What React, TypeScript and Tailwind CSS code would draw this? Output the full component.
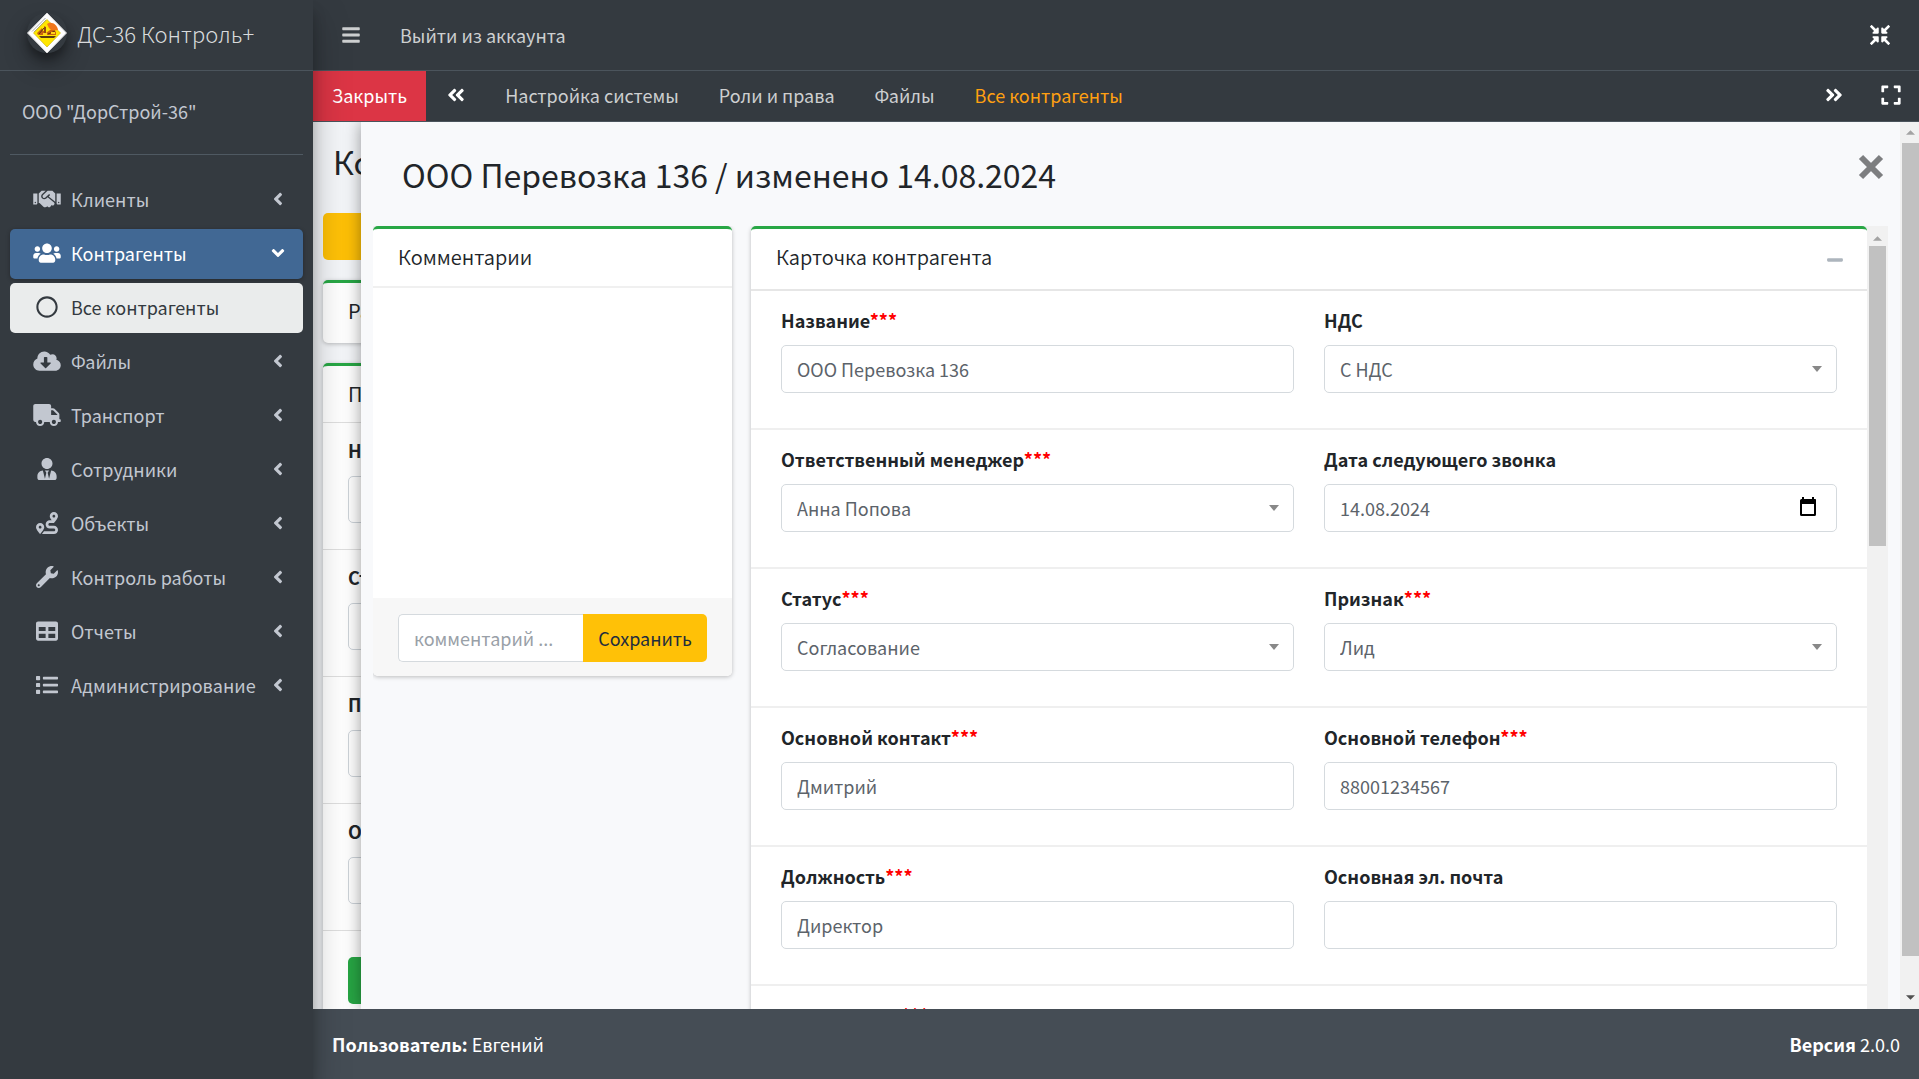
import type { ReactNode } from "react";
import {
  FaAngleDoubleLeft,
  FaAngleDoubleRight,
  FaAngleDown,
  FaAngleLeft,
  FaBars,
  FaCloudDownloadAlt,
  FaCompressArrowsAlt,
  FaExpand,
  FaHandshake,
  FaList,
  FaMinus,
  FaRegCircle,
  FaRoute,
  FaTable,
  FaTruck,
  FaUserTie,
  FaUsers,
  FaWrench,
} from "react-icons/fa";

const WIDE_ICON = "h-[22px] w-7";
const ICON = "size-[22px]";

function Logo() {
  return (
    <span className="flex size-10 items-center justify-center rounded-full shadow-[0_12px_24px_rgba(0,0,0,0.3),0_6px_8px_rgba(0,0,0,0.3)]">
      <svg viewBox="0 0 40 40" className="size-10" aria-hidden="true">
        <path d="M20 0 39.500 20 20 40 .5 20Z" fill="#fff" stroke="#d5d5d5" strokeWidth="1" />
        <path d="M5 18.500 18.500 5M7 19 19 7" stroke="#a8a8a8" strokeWidth="1" fill="none" />
        <path d="M20 6.500 33.500 20 20 34 6.500 20Z" fill="#ffe600" stroke="#c4ad00" strokeWidth=".6" />
        <path d="M20 11c4-3 10 0 11 6l-6 1-3-3Z" fill="#f0761a" />
        <path d="M10 20l5-5 1 3h1v-5l2 1v6l4-3h4l2 2v3H11Z" fill="#c9640f" />
        <path d="M12 21l5-6M18 14v8M21 21l7-3" stroke="#5a3410" strokeWidth="1" fill="none" />
        <path d="M12 23h17l-2 2H14Z" fill="#5a3c10" />
        <path d="M16 20h4v2h-4ZM24 19h4v2h-4Z" fill="#ffd21a" />
      </svg>
    </span>
  );
}

type Item = { label: string; icon: ReactNode; active?: boolean; child?: boolean };

const MENU: Item[] = [
  { label: "Клиенты", icon: <FaHandshake className={WIDE_ICON} /> },
  { label: "Контрагенты", icon: <FaUsers className={WIDE_ICON} />, active: true },
  { label: "Все контрагенты", icon: <FaRegCircle className={ICON} />, child: true },
  { label: "Файлы", icon: <FaCloudDownloadAlt className={WIDE_ICON} /> },
  { label: "Транспорт", icon: <FaTruck className={WIDE_ICON} /> },
  { label: "Сотрудники", icon: <FaUserTie className={ICON} /> },
  { label: "Объекты", icon: <FaRoute className={ICON} /> },
  { label: "Контроль работы", icon: <FaWrench className={ICON} /> },
  { label: "Отчеты", icon: <FaTable className={ICON} /> },
  { label: "Администрирование", icon: <FaList className={ICON} /> },
];

function menuTone(item: Item) {
  if (item.active) return "bg-[#416894] text-white shadow-[0_1px_4px_rgba(0,0,0,0.3)]";
  if (item.child) return "bg-[#eaecec] text-[#343a40]";
  return "text-[#c2c7d0]";
}

function Sidebar() {
  return (
    <aside className="relative z-20 flex w-[313px] shrink-0 flex-col bg-[#343a40] shadow-[0_18px_35px_rgba(0,0,0,0.25),0_12px_12px_rgba(0,0,0,0.22)]">
      <a href="#" className="flex h-[71px] items-center gap-[10px] border-b border-[#4b545c] pb-1 pl-[27px] text-[#d8dadc]">
        <Logo />
        <span className="text-[22px] leading-8 font-light">ДС-36 Контроль+</span>
      </a>
      <div className="mx-[10px] flex h-[84px] items-center border-b border-[#4f5962] pb-1 pl-3 text-[#c2c7d0]">
        ООО "ДорСтрой-36"
      </div>
      <nav className="mx-[10px] mt-5 flex flex-col gap-1">
        {MENU.map((item) => (
          <a
            key={item.label}
            href="#"
            className={`flex h-[50px] items-center rounded-[5px] pr-[15px] pb-0.5 pl-5 ${menuTone(item)}`}
          >
            <span className="mr-[7px] flex w-[34px] justify-center">{item.icon}</span>
            <span className="grow">{item.label}</span>
            {item.child ? null : item.active ? (
              <FaAngleDown className="size-5" />
            ) : (
              <FaAngleLeft className="size-5" />
            )}
          </a>
        ))}
      </nav>
    </aside>
  );
}

const TABS = ["Настройка системы", "Роли и права", "Файлы", "Все контрагенты"];

function TopBars() {
  return (
    <header className="shrink-0 bg-[#343a40] text-[#cdcfd0]">
      <div className="flex h-[71px] items-center border-b border-[#4b545c] pr-[29px] pb-px pl-7">
        <button type="button" aria-label="Меню">
          <FaBars className="size-5" />
        </button>
        <a href="#" className="ml-[39px]">
          Выйти из аккаунта
        </a>
        <button type="button" aria-label="Свернуть" className="ml-auto text-white">
          <FaCompressArrowsAlt className="size-5" />
        </button>
      </div>
      <div className="flex h-[51px] items-center border-b border-[#4b545c]">
        <button type="button" className="h-[50px] bg-[#dc3545] px-[19px] pb-0.5 text-white">
          Закрыть
        </button>
        <div className="flex grow items-center pb-0.5">
          <button type="button" aria-label="Назад" className="mr-[19px] ml-5 text-white">
            <FaAngleDoubleLeft className="size-5" />
          </button>
          {TABS.map((tab) => (
            <a
              key={tab}
              href="#"
              className={tab === "Все контрагенты" ? "px-5 text-[#ffa011]" : "px-5"}
            >
              {tab}
            </a>
          ))}
          <button type="button" aria-label="Вперед" className="ml-auto text-white">
            <FaAngleDoubleRight className="size-5" />
          </button>
          <button type="button" aria-label="На весь экран" className="mr-[17px] ml-9 text-white">
            <FaExpand className="size-[22px]" />
          </button>
        </div>
      </div>
    </header>
  );
}

const FILTERS = ["Название", "Статус", "Признак", "Ответственный"];

function ListPage() {
  return (
    <div className="h-full overflow-hidden bg-[#f4f6f9] px-[10px] text-[#212529]">
      <h1 className="flex h-[91px] items-start pt-4 pl-[10px] text-[32px] leading-[46px]">Контрагенты</h1>
      <button type="button" aria-label="Добавить" className="block h-[47px] w-full rounded-[5px] bg-[#ffc107]" />
      <section className="mt-5 rounded-[5px] border-t-[3px] border-[#28a745] bg-white shadow-[0_1px_4px_rgba(0,0,0,0.25)]">
        <h2 className="pb-1 pl-[25px] text-xl leading-[56px]">Разделы</h2>
      </section>
      <section className="mt-5 rounded-[5px] border-t-[3px] border-[#28a745] bg-white shadow-[0_1px_4px_rgba(0,0,0,0.25)]">
        <h2 className="border-b border-[#dfdfdf] pl-[25px] text-xl leading-[56px]">Поиск</h2>
        {FILTERS.map((name) => (
          <div key={name} className="border-b border-[#dfdfdf] px-[25px] pt-3 pb-[26px]">
            <label htmlFor={`filter-${name}`} className="mb-[11px] block leading-[30px] font-bold">
              {name}
            </label>
            <input
              id={`filter-${name}`}
              className="block h-[47px] w-full rounded-[5px] border border-[#ced4da] bg-white"
            />
          </div>
        ))}
        <div className="px-[25px] py-[26px]">
          <button type="button" aria-label="Найти" className="block h-[47px] w-full rounded-[5px] bg-[#28a745]" />
        </div>
      </section>
    </div>
  );
}

type FieldDef = {
  id: string;
  label: string;
  value?: string;
  required?: boolean;
  kind?: "select" | "date";
};

const ROWS: FieldDef[][] = [
  [
    { id: "name", label: "Название", value: "ООО Перевозка 136", required: true },
    { id: "vat", label: "НДС", value: "С НДС", kind: "select" },
  ],
  [
    { id: "manager", label: "Ответственный менеджер", value: "Анна Попова", required: true, kind: "select" },
    { id: "call", label: "Дата следующего звонка", value: "14.08.2024", kind: "date" },
  ],
  [
    { id: "status", label: "Статус", value: "Согласование", required: true, kind: "select" },
    { id: "sign", label: "Признак", value: "Лид", required: true, kind: "select" },
  ],
  [
    { id: "contact", label: "Основной контакт", value: "Дмитрий", required: true },
    { id: "phone", label: "Основной телефон", value: "88001234567", required: true },
  ],
  [
    { id: "position", label: "Должность", value: "Директор", required: true },
    { id: "email", label: "Основная эл. почта" },
  ],
  [
    { id: "contact2", label: "Доп. контакт", required: true },
    { id: "phone2", label: "Доп. телефон" },
  ],
];

const CONTROL =
  "block h-12 w-full appearance-none rounded-[5px] border border-[#d5dade] bg-white px-[15px] text-[#5c636a] outline-none";

function Field({ id, label, value = "", required, kind }: FieldDef) {
  return (
    <div>
      <label htmlFor={id} className="mb-[10px] block leading-[30px] font-bold">
        {label}
        {required && <span className="text-[#ff0000]">***</span>}
      </label>
      <div className="relative">
        {kind === "select" ? (
          <>
            <select id={id} className={CONTROL} defaultValue={value}>
              <option>{value}</option>
            </select>
            <svg viewBox="0 0 10 6" className="pointer-events-none absolute top-[21px] right-[15px] h-[6px] w-[10px]" aria-hidden="true">
              <path d="M0 0h10L5 6Z" fill="#888" />
            </svg>
          </>
        ) : (
          <input id={id} className={CONTROL} defaultValue={value} />
        )}
        {kind === "date" && (
          <button type="button" aria-label="Выбрать дату" className="absolute top-[13px] right-5">
            <svg viewBox="0 0 18 20" className="h-5 w-[18px]" aria-hidden="true">
              <path
                d="M3 0h2v2h8V0h2v2h1.500A1.500 1.500 0 0 1 17 3.500v14a1.500 1.500 0 0 1-1.500 1.500h-13A1.500 1.500 0 0 1 1 17.500v-14A1.500 1.500 0 0 1 2.500 2H3ZM3 7v10h12V7Z"
                fill="#000"
                fillRule="evenodd"
              />
            </svg>
          </button>
        )}
      </div>
    </div>
  );
}

function Arrow({ down }: { down?: boolean }) {
  return (
    <svg viewBox="0 0 10 5" className="h-[5px] w-[9px]" aria-hidden="true">
      {down ? <path d="M0 0h10L5 5Z" fill="#505050" /> : <path d="M0 5h10L5 0Z" fill="#a3a3a3" />}
    </svg>
  );
}

function Modal() {
  return (
    <div
      role="dialog"
      aria-labelledby="card-title"
      className="absolute inset-y-0 right-0 left-12 z-10 flex bg-[#f8f9fb] text-[#212529] shadow-[0_0_16px_rgba(0,0,0,0.4)]"
    >
      <div className="flex min-w-0 grow flex-col px-3">
        <div className="flex h-[104px] shrink-0 items-start justify-between pr-1 pl-[29px]">
          <h1 id="card-title" className="pt-7 text-[32px] leading-[48px]">
            ООО Перевозка 136 / изменено 14.08.2024
          </h1>
          <button type="button" aria-label="Закрыть карточку" className="mt-8">
            <svg viewBox="0 0 26 26" className="size-[26px]" aria-hidden="true">
              <path d="M3 3 23 23M23 3 3 23" stroke="#7d7e80" strokeWidth="6" />
            </svg>
          </button>
        </div>
        <div className="flex min-h-0 grow overflow-hidden">
          <div className="grid min-w-0 grow grid-cols-[minmax(0,359fr)_minmax(0,1116fr)] items-start gap-[19px]">
            <section className="rounded-[5px] border-t-[3px] border-[#28a745] bg-white shadow-[0_1px_4px_rgba(0,0,0,0.25)]">
              <h2 className="border-b-2 border-[#f0f0f0] px-[25px] pb-px text-xl leading-[56px] font-[350]">Комментарии</h2>
              <div className="h-[310px]" />
              <form className="flex rounded-b-[5px] bg-[#f7f7f7] px-[25px] pt-4 pb-[14px]">
                <input
                  aria-label="Комментарий"
                  placeholder="комментарий ..."
                  className="h-12 min-w-0 grow rounded-l-[5px] border border-r-0 border-[#d5dade] bg-white px-[15px] outline-none placeholder:text-[#99a0a7]"
                />
                <button type="button" className="h-12 rounded-r-[5px] bg-[#ffc107] px-[15px] text-[#1f2d3d]">
                  Сохранить
                </button>
              </form>
            </section>
            <section className="rounded-[5px] border-t-[3px] border-[#28a745] bg-white shadow-[0_1px_4px_rgba(0,0,0,0.25)]">
              <div className="flex h-[62px] items-start justify-between border-b-2 border-[#e6e6e6] pr-[23px] pl-[25px]">
                <h2 className="text-xl leading-[56px] font-[350]">Карточка контрагента</h2>
                <button type="button" aria-label="Свернуть карточку" className="mt-[22px] text-[#adb5bd]">
                  <FaMinus className="size-[18px]" />
                </button>
              </div>
              <form>
                {ROWS.map((row) => (
                  <div
                    key={row[0].id}
                    className="grid grid-cols-2 gap-[30px] border-b-2 border-[#efefef] px-[30px] pt-[14px] pb-[35px]"
                  >
                    {row.map((field) => (
                      <Field key={field.id} {...field} />
                    ))}
                  </div>
                ))}
              </form>
            </section>
          </div>
          <div className="flex w-[21px] shrink-0 flex-col items-center bg-[#f1f1f1]">
            <div className="flex h-5 shrink-0 items-center pt-1">
              <Arrow />
            </div>
            <div className="h-[300px] w-[17px] bg-[#c1c1c1]" />
          </div>
        </div>
      </div>
      <div className="flex w-[19px] shrink-0 flex-col items-end bg-[#f1f1f1]">
        <div className="flex h-[21px] w-[17px] shrink-0 items-center justify-center">
          <Arrow />
        </div>
        <div className="w-[17px] grow bg-[#c1c1c1]" />
        <div className="flex h-[53px] w-[17px] shrink-0 items-end justify-center pb-[9px]">
          <Arrow down />
        </div>
      </div>
    </div>
  );
}

export default function App() {
  return (
    <div className="flex h-screen overflow-hidden font-['Noto_Sans_CJK_SC','Noto_Sans',sans-serif] text-lg leading-[30px]">
      <Sidebar />
      <div className="flex min-w-0 grow flex-col">
        <TopBars />
        <main className="relative min-h-0 grow overflow-hidden">
          <ListPage />
          <Modal />
        </main>
        <footer className="flex h-[70px] shrink-0 items-center justify-between bg-[#454d55] px-[19px] text-white">
          <span>
            <strong>Пользователь:</strong> Евгений
          </span>
          <span>
            <strong>Версия</strong> 2.0.0
          </span>
        </footer>
      </div>
    </div>
  );
}
